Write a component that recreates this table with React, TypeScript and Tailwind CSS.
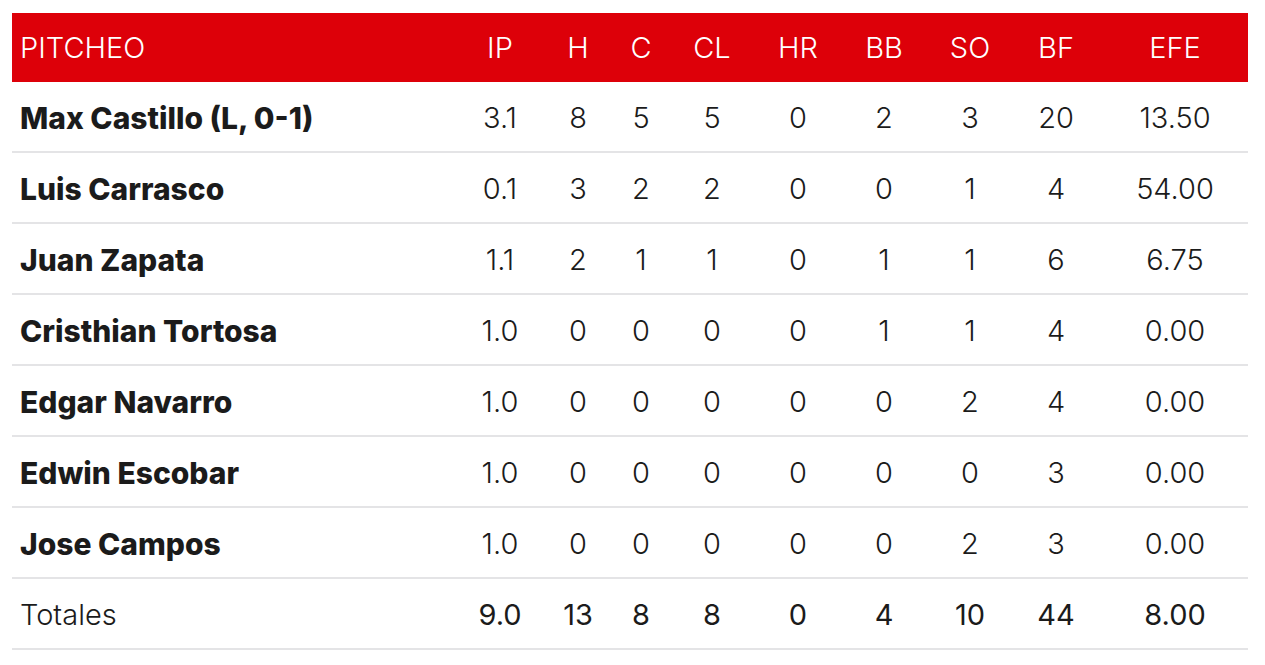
const cols = ['IP', 'H', 'C', 'CL', 'HR', 'BB', 'SO', 'BF', 'EFE'];

const rows: { name: string; stats: string[] }[] = [
  { name: 'Max Castillo (L, 0-1)', stats: ['3.1', '8', '5', '5', '0', '2', '3', '20', '13.50'] },
  { name: 'Luis Carrasco', stats: ['0.1', '3', '2', '2', '0', '0', '1', '4', '54.00'] },
  { name: 'Juan Zapata', stats: ['1.1', '2', '1', '1', '0', '1', '1', '6', '6.75'] },
  { name: 'Cristhian Tortosa', stats: ['1.0', '0', '0', '0', '0', '1', '1', '4', '0.00'] },
  { name: 'Edgar Navarro', stats: ['1.0', '0', '0', '0', '0', '0', '2', '4', '0.00'] },
  { name: 'Edwin Escobar', stats: ['1.0', '0', '0', '0', '0', '0', '0', '3', '0.00'] },
  { name: 'Jose Campos', stats: ['1.0', '0', '0', '0', '0', '0', '2', '3', '0.00'] },
];

const totals = ['9.0', '13', '8', '8', '0', '4', '10', '44', '8.00'];

// column grid: name + 9 stat columns
const grid = 'grid grid-cols-[448px_80px_76px_50px_92px_80px_92px_80px_92px_146px]';

export default function App() {
  return (
    <div className="min-h-screen bg-white pt-[13px] pl-[12px] font-['Inter',sans-serif] text-[#1b1b1b]">
      <div className="w-[1236px]">
        <div className={`${grid} h-[69px] items-center bg-[#dd0009] pt-[1px] text-[29px] font-light text-white`}>
          <div className="pl-2">PITCHEO</div>
          {cols.map((c) => (
            <div key={c} className="text-center">{c}</div>
          ))}
        </div>
        {rows.map((r) => (
          <div key={r.name} className={`${grid} h-[71px] items-center border-b-2 border-[#e4e4e6] pt-[3px] text-[29px] font-light`}>
            <div className="pl-2 text-[30px] font-extrabold">{r.name}</div>
            {r.stats.map((s, i) => (
              <div key={i} className="text-center">{s}</div>
            ))}
          </div>
        ))}
        <div className={`${grid} h-[71px] items-center border-b-2 border-[#e4e4e6] pt-[3px] text-[29px]`}>
          <div className="pl-2 font-light">Totales</div>
          {totals.map((s, i) => (
            <div key={i} className="text-center font-normal">{s}</div>
          ))}
        </div>
      </div>
    </div>
  );
}
